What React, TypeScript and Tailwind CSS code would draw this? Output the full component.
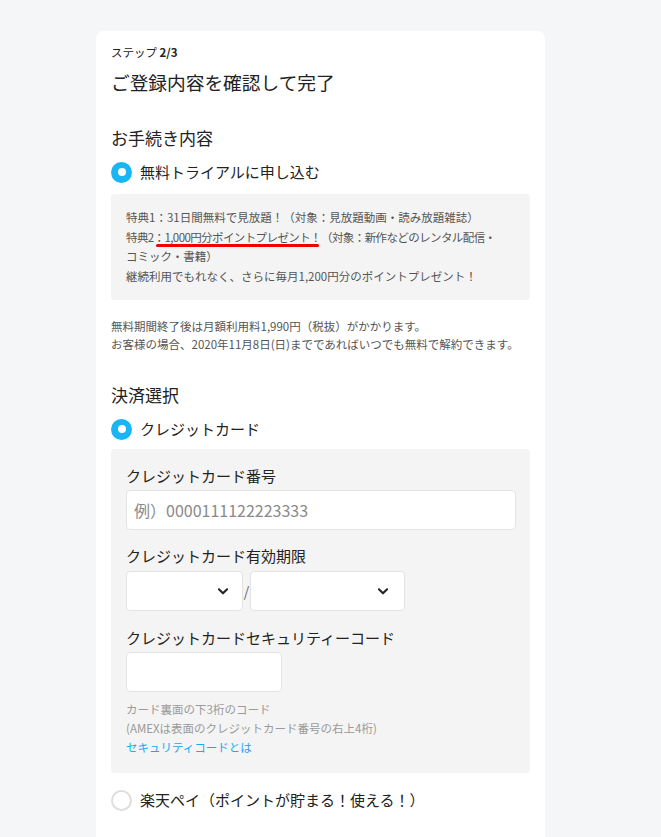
import React from 'react';

const font = { fontFamily: '"Noto Sans CJK JP", "Noto Sans", sans-serif' };

// ラジオボタン
const Radio: React.FC<{ checked?: boolean }> = ({ checked }) =>
  checked ? (
    <span className="flex h-[21px] w-[21px] shrink-0 items-center justify-center rounded-full bg-[#19b5f4]">
      <span className="h-[8px] w-[8px] rounded-full bg-white" />
    </span>
  ) : (
    <span className="h-[21px] w-[21px] shrink-0 rounded-full border-2 border-[#dedede] bg-white" />
  );

const Chevron = () => (
  <svg width="14" height="14" viewBox="0 0 24 24" fill="none" stroke="#222" strokeWidth="3.5" strokeLinecap="round" strokeLinejoin="round">
    <polyline points="5,9 12,16 19,9" />
  </svg>
);

export default function App() {
  return (
    <div className="min-h-[837px] bg-[#f5f6f8] pt-[31px]" style={font}>
      <div className="ml-[96px] w-[449px] rounded-t-[8px] bg-white px-[15px] pb-[40px] pt-[13px] text-[#222]">
        {/* ステップ */}
        <p className="text-[11.5px] leading-[16px]">
          ステップ <span className="font-bold">2/3</span>
        </p>
        <h1 className="mt-[8px] text-[18.7px] leading-[28px]">ご登録内容を確認して完了</h1>

        {/* お手続き内容 */}
        <h2 className="mt-[30px] text-[17px] leading-[24px]">お手続き内容</h2>
        <div className="mt-[10px] flex items-center gap-[8px]">
          <Radio checked />
          <span className="text-[15px] leading-[24px]">無料トライアルに申し込む</span>
        </div>
        <div className="mt-[10px] rounded-[4px] bg-[#f4f4f4] px-[15px] py-[14px] text-[11.5px] leading-[19.5px] text-[#555]">
          <p>特典1：31日間無料で見放題！（対象：見放題動画・読み放題雑誌）</p>
          <p className="whitespace-nowrap tracking-[-0.6px]">
            特典2
            <span className="relative">
              ：1,000円分ポイントプレゼント！
              <span className="absolute bottom-[-2px] left-[2px] right-[2px] h-[3px] rounded-full bg-[#f00000]" />
            </span>
            （対象：新作などのレンタル配信・
          </p>
          <p>コミック・書籍）</p>
          <p>継続利用でもれなく、さらに毎月1,200円分のポイントプレゼント！</p>
        </div>
        <div className="mt-[17px] text-[11.5px] leading-[18px] text-[#555]">
          <p>無料期間終了後は月額利用料1,990円（税抜）がかかります。</p>
          <p>お客様の場合、2020年11月8日(日)までであればいつでも無料で解約できます。</p>
        </div>

        {/* 決済選択 */}
        <h2 className="mt-[30px] text-[17px] leading-[24px]">決済選択</h2>
        <div className="mt-[10px] flex items-center gap-[8px]">
          <Radio checked />
          <span className="text-[15px] leading-[24px]">クレジットカード</span>
        </div>
        <div className="mt-[8px] rounded-[4px] bg-[#f4f4f4] px-[15px] pb-[16px] pt-[15px]">
          <p className="text-[15px] leading-[24px]">クレジットカード番号</p>
          <div className="mt-[2px] flex h-[40px] w-[390px] items-center rounded-[4px] border border-[#e3e3e3] bg-white px-[7px] text-[16px] text-[#8a8a8a]">
            例）0000111122223333
          </div>

          <p className="mt-[14px] text-[15px] leading-[24px]">クレジットカード有効期限</p>
          <div className="mt-[3px] flex items-center">
            <div className="flex h-[40px] w-[117px] items-center justify-end rounded-[4px] border border-[#e3e3e3] bg-white pr-[12px]">
              <Chevron />
            </div>
            <span className="w-[7px] text-center text-[14px] text-[#666]">/</span>
            <div className="flex h-[40px] w-[155px] items-center justify-end rounded-[4px] border border-[#e3e3e3] bg-white pr-[14px]">
              <Chevron />
            </div>
          </div>

          <p className="mt-[15px] text-[15px] leading-[24px]">クレジットカードセキュリティーコード</p>
          <div className="mt-[2px] h-[40px] w-[156px] rounded-[4px] border border-[#e3e3e3] bg-white" />
          <div className="mt-[8px] text-[11.5px] leading-[19px] text-[#9a9a9a]">
            <p>カード裏面の下3桁のコード</p>
            <p>(AMEXは表面のクレジットカード番号の右上4桁)</p>
            <p className="text-[#19a9ef]">セキュリティコードとは</p>
          </div>
        </div>

        <div className="mt-[15px] flex items-center gap-[8px]">
          <Radio />
          <span className="text-[15px] leading-[24px]">楽天ペイ（ポイントが貯まる！使える！）</span>
        </div>
      </div>
    </div>
  );
}
